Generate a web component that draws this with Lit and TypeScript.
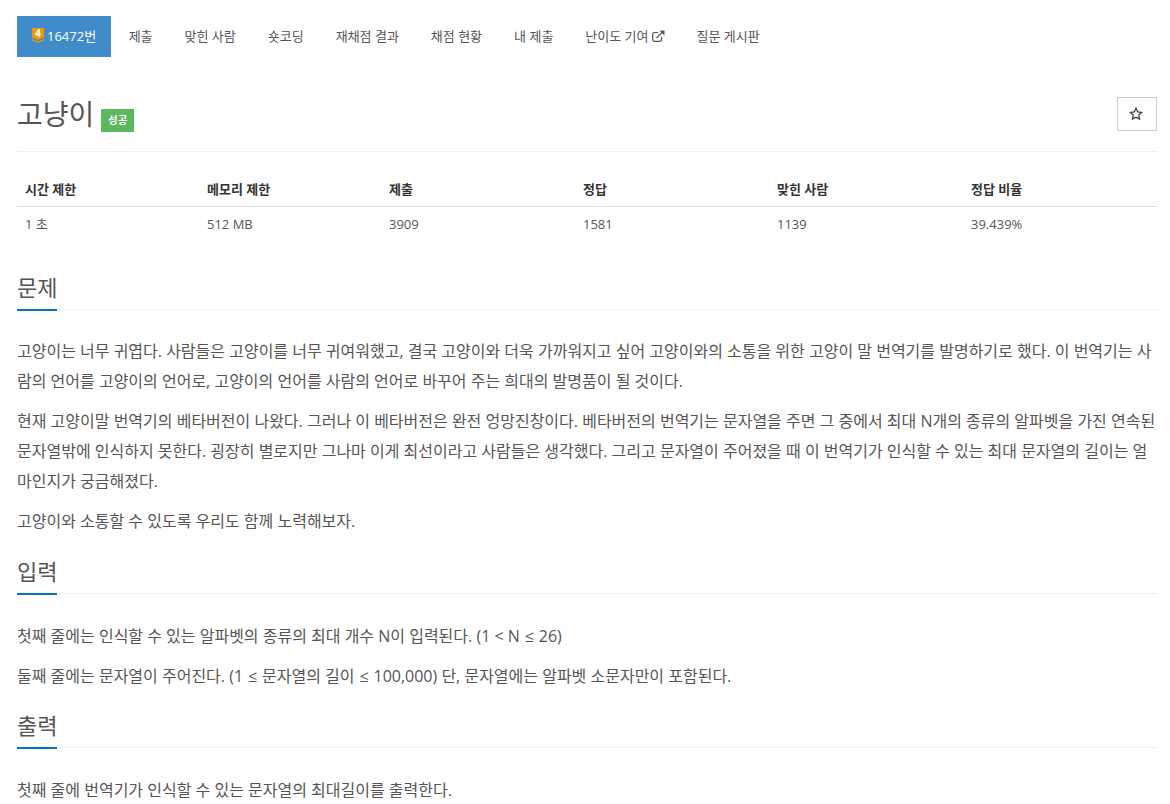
import { LitElement, html, css } from 'lit';
import { customElement } from 'lit/decorators.js';

const tabs = ['제출', '맞힌 사람', '숏코딩', '재채점 결과', '채점 현황', '내 제출'];

@customElement('app-root')
export class AppRoot extends LitElement {
  static styles = css`
    :host {
      display: block;
      height: 804px;
      overflow: hidden;
      box-sizing: border-box;
      padding: 16px 13px 0 17px;
      background: #fff;
      color: #555;
      font-family: 'Open Sans', 'Noto Sans CJK KR', sans-serif;
      font-size: 14px;
      line-height: 20px;
    }

    /* === Tabs === */
    .tabs {
      display: flex;
      gap: 2px;
      margin: 0;
      padding: 0;
      list-style: none;
      font-size: 13px;
    }
    .tabs a {
      display: flex;
      align-items: center;
      gap: 3px;
      height: 39px;
      padding: 0 15px 2px;
      color: #555;
    }
    .tabs a.active {
      background: #428bca;
      color: #fff;
      margin-right: 0.5px;
    }
    .tier { width: 12px; height: 15px; display: block; overflow: visible; }
    .tier text { font-family: 'Open Sans', sans-serif; font-size: 10px; font-weight: 700; fill: #fff; }
    .ext { width: 13px; height: 12px; display: block; }

    /* === Title === */
    .head {
      display: flex;
      align-items: flex-start;
      justify-content: space-between;
      margin-top: 37px;
      height: 57px;
      border-bottom: 1px solid #eee;
    }
    .title { display: flex; align-items: flex-start; gap: 7px; }
    h1 {
      margin: 0;
      font-size: 28px;
      font-weight: 400;
      line-height: 40px;
      color: #555;
    }
    .badge {
      background: #5cb85c;
      color: #fff;
      font-size: 10.5px;
      font-weight: 700;
      line-height: 23px;
      height: 23px;
      padding: 0 6.75px;
      margin-top: 15px;
    }
    .star {
      width: 40px;
      height: 34px;
      margin-top: 3px;
      padding: 0 2px 1px 0;
      box-sizing: border-box;
      border: 1px solid #ccc;
      display: flex;
      align-items: center;
      justify-content: center;
    }
    .star svg { width: 14px; height: 13px; display: block; }

    /* === Stats === */
    table {
      width: 100%;
      margin-top: 19px;
      border-collapse: collapse;
      table-layout: fixed;
      font-size: 13px;
    }
    th, td { box-sizing: border-box; text-align: left; line-height: 20px; }
    th { font-weight: 700; color: #333; border-bottom: 1px solid #ddd; padding: 8px 8px 7px; }
    td { color: #555; padding: 7px 8px 8px; }
    .c1 { width: 182px; }
    .c2 { width: 182px; }
    .c3 { width: 194px; }
    .c4 { width: 194px; }
    .c5 { width: 194px; }

    /* === Sections === */
    section h2 {
      margin: 0;
      font-size: 22px;
      font-weight: 400;
      line-height: 29px;
      color: #555;
      padding-bottom: 7px;
      position: relative;
      border-bottom: 1px dotted #e5e5e5;
    }
    section h2::after {
      content: '';
      position: absolute;
      left: 0;
      bottom: -2px;
      width: 40px;
      height: 2px;
      background: #0076c0;
    }
    section p {
      margin: 0 0 10px;
      font-size: 16px;
      line-height: 30px;
      color: #555;
    }
    .le { padding: 0 0.75px; }
    .body { padding-top: 27px; }
    .s1 { margin-top: 31px; }
    .s1 .body { padding-top: 26px; }
    .s2 { margin-top: 21px; }
    .s3 { margin-top: 20px; }
  `;

  render() {
    return html`
      <ul class="tabs">
        <li>
          <a class="active">
            <svg class="tier" viewBox="0 0 12 15">
              <path d="M0 0h12v9.500L6 12 0 9.500z" fill="#ec9a00" />
              <path d="M0 11l6 2.500 6-2.500v1.500L6 15 0 12.500z" fill="#ec9a00" />
              <text x="6" y="9" text-anchor="middle">4</text>
            </svg>
            16472번
          </a>
        </li>
        ${tabs.map((t) => html`<li><a>${t}</a></li>`)}
        <li>
          <a>
            난이도 기여
            <svg class="ext" viewBox="0 0 13 12" fill="none" stroke="#555" stroke-width="1.200">
              <path d="M6 2.500H2.200A1.500 1.500 0 0 0 .7 4v5.800a1.500 1.500 0 0 0 1.500 1.500H8a1.500 1.500 0 0 0 1.500-1.500V7" />
              <path d="M4.500 8L11 1.500" />
              <path d="M7.500.6h5v5z" fill="#555" stroke="none" />
            </svg>
          </a>
        </li>
        <li><a>질문 게시판</a></li>
      </ul>

      <div class="head">
        <div class="title">
          <h1>고냥이</h1>
          <span class="badge">성공</span>
        </div>
        <div class="star">
          <svg viewBox="0 0 14 13" fill="none" stroke="#333" stroke-width="1.200">
            <path d="M7 1.300l1.700 3.600 3.900.5-2.900 2.700.8 3.900L7 10.100l-3.500 1.900.8-3.900L1.400 5.400l3.900-.5z" />
          </svg>
        </div>
      </div>

      <table>
        <thead>
          <tr>
            <th class="c1">시간 제한</th>
            <th class="c2">메모리 제한</th>
            <th class="c3">제출</th>
            <th class="c4">정답</th>
            <th class="c5">맞힌 사람</th>
            <th>정답 비율</th>
          </tr>
        </thead>
        <tbody>
          <tr>
            <td>1 초</td>
            <td>512 MB</td>
            <td>3909</td>
            <td>1581</td>
            <td>1139</td>
            <td>39.439%</td>
          </tr>
        </tbody>
      </table>

      <section class="s1">
        <h2>문제</h2>
        <div class="body">
          <p>고양이는 너무 귀엽다. 사람들은 고양이를 너무 귀여워했고, 결국 고양이와 더욱 가까워지고 싶어 고양이와의 소통을 위한 고양이 말 번역기를 발명하기로 했다. 이 번역기는 사람의 언어를 고양이의 언어로, 고양이의 언어를 사람의 언어로 바꾸어 주는 희대의 발명품이 될 것이다.</p>
          <p>현재 고양이말 번역기의 베타버전이 나왔다. 그러나 이 베타버전은 완전 엉망진창이다. 베타버전의 번역기는 문자열을 주면 그 중에서 최대 N개의 종류의 알파벳을 가진 연속된 문자열밖에 인식하지 못한다. 굉장히 별로지만 그나마 이게 최선이라고 사람들은 생각했다. 그리고 문자열이 주어졌을 때 이 번역기가 인식할 수 있는 최대 문자열의 길이는 얼마인지가 궁금해졌다.</p>
          <p>고양이와 소통할 수 있도록 우리도 함께 노력해보자.</p>
        </div>
      </section>

      <section class="s2">
        <h2>입력</h2>
        <div class="body">
          <p>첫째 줄에는 인식할 수 있는 알파벳의 종류의 최대 개수 N이 입력된다. (1 &lt; N <span class="le">≤</span> 26)</p>
          <p>둘째 줄에는 문자열이 주어진다. (1 <span class="le">≤</span> 문자열의 길이 <span class="le">≤</span> 100,000) 단, 문자열에는 알파벳 소문자만이 포함된다.</p>
        </div>
      </section>

      <section class="s3">
        <h2>출력</h2>
        <div class="body">
          <p>첫째 줄에 번역기가 인식할 수 있는 문자열의 최대길이를 출력한다.</p>
        </div>
      </section>
    `;
  }
}
